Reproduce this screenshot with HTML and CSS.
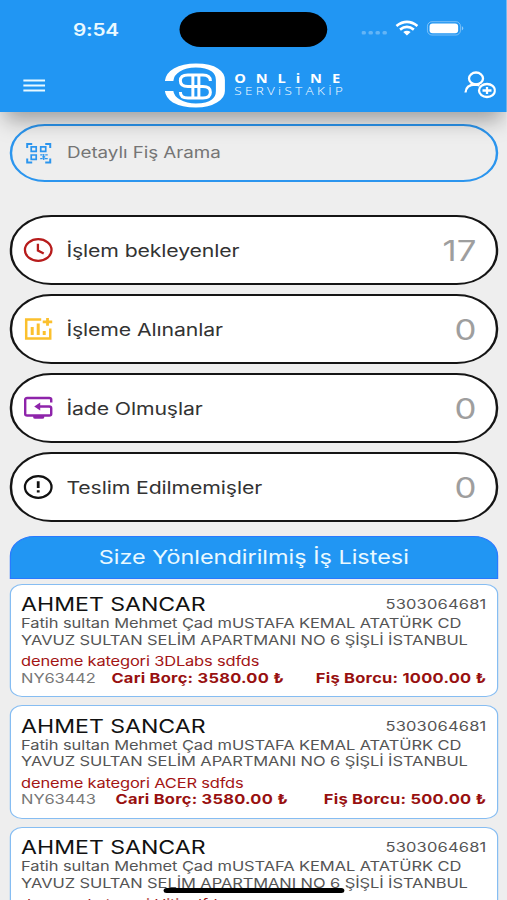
FILE: index.html
```html
<!DOCTYPE html>
<html lang="tr">
<head>
<meta charset="utf-8">
<title>Online Servis Takip</title>
<link rel="stylesheet" href="styles.css">
</head>
<body>
<div class="screen">
  <header class="header">
    <div class="status">
      <span class="time">9:54</span>
      <span class="island"></span>
      <svg class="signals" viewBox="0 0 106 18" preserveAspectRatio="none">
        <g fill="#fff" opacity=".3"><rect x="0" y="12" width="4.5" height="3.5" rx="1.5"/><rect x="7" y="12" width="4.5" height="3.5" rx="1.5"/><rect x="14" y="12" width="4.5" height="3.5" rx="1.5"/><rect x="21" y="12" width="4.5" height="3.5" rx="1.5"/></g>
        <g fill="none" stroke="#fff" stroke-width="2.7"><path d="M35 7Q45.500-1.200 56 7"/><path d="M38.600 10.600Q45.500 5.200 52.400 10.600"/></g>
        <path d="M41.800 13Q45.500 10.300 49.200 13L45.500 16.500Z" fill="#fff"/>
        <rect x="66" y="2.700" width="33" height="13.300" rx="4.500" fill="none" stroke="#fff" stroke-opacity=".4"/>
        <rect x="68.100" y="4.500" width="28.600" height="9.800" rx="3" fill="#fff"/>
        <path d="M100.400 7Q103.400 9.300 100.400 11.500Z" fill="#fff" opacity=".5"/>
      </svg>
    </div>
    <div class="bar">
      <svg class="menu" viewBox="0 0 22 13" preserveAspectRatio="none"><path d="M0 1.500H22M0 6.500H22M0 11.500H22" stroke="#e9f9ff" stroke-width="2.200"/></svg>
      <div class="brand">
        <svg class="mark" viewBox="0 0 61 45" preserveAspectRatio="none">
          <path fill="#fff" fill-rule="evenodd" d="M0 18Q1 10 9 5.500Q18 .5 31 .5Q46 .5 53 5.500Q60 10 60 17V28Q60 35 52 39.500Q44 44.500 31 44.500Q17 44.500 8 39.500Q1 35 0 28H8.500Q9 33 15 36.500Q22 40.500 31 40.500Q42 40.500 47 36.500Q51 33.500 51 28V17Q51 11.500 47 8.500Q41 4.500 31 4.500Q21 4.500 15 8.500Q9 12 8.500 18Z"/>
          <g fill="none" stroke="#fff" stroke-width="3"><path d="M45.500 18Q45.500 12 38 12H23Q15.500 12 15.500 17.700T23 23.500H38Q45.500 23.500 45.500 29.200T38 35H23Q15.500 35 15.500 29"/><path d="M28 12V35M34 12V35"/></g>
        </svg>
        <div class="words"><span class="online">ONLiNE</span><span class="servis">SERViSTAKİP</span></div>
      </div>
      <svg class="adduser" viewBox="0 0 32 28" preserveAspectRatio="none"><g fill="none" stroke="#fff" stroke-width="2.300"><ellipse cx="12" cy="7.500" rx="7" ry="6"/><path d="M1.500 21.500Q2 13.800 11 13.500Q14 13.500 15.500 14.500"/><ellipse cx="23" cy="19.500" rx="8" ry="6.500"/><path d="M18.500 19.500H27.500M23 16V23"/></g></svg>
    </div>
  </header>
  <main class="content">
    <div class="search">
      <svg class="icon" viewBox="0 0 30 24" preserveAspectRatio="none"><g fill="none" stroke="#2b95ee" stroke-width="2"><path d="M4 7V3H9M22 3H27V7M4 17.500V21.500H9M22 21.500H27V17.500"/><path d="M8 5.800H13V10.300H8ZM17.500 5.800H22.500V10.300H17.500ZM8 14H13V18.300H8Z" stroke-width="1.700"/><path d="M17 13.800H19.500M22 13.800H24.500M19 15.800H22M17 17.600H19.500M21.500 17.600H24.500M20.500 13V19" stroke-width="1.300"/></g></svg>
      <span class="placeholder">Detaylı Fiş Arama</span>
    </div>
    <div class="stats">
      <div class="stat">
        <svg class="icon" viewBox="0 0 30 24" preserveAspectRatio="none"><g fill="none" stroke="#b71c1c" stroke-width="2.300"><ellipse cx="15" cy="12" rx="13.300" ry="10.800"/><path d="M14.700 5.800V12.500L20.500 15.500"/></g></svg>
        <span class="label">İşlem bekleyenler</span><span class="count">17</span>
      </div>
      <div class="stat">
        <svg class="icon" viewBox="0 0 30 24" preserveAspectRatio="none"><g fill="none" stroke="#fbc02d" stroke-width="2.500"><path d="M18 2.500H3V21.500H27V11.500"/><path d="M9 10V18M15 6.500V18M21 14V18" stroke-width="3"/><path d="M19.500 4.800H29M24.300 1V8.800" stroke-width="2.800"/></g></svg>
        <span class="label">İşleme Alınanlar</span><span class="count">0</span>
      </div>
      <div class="stat">
        <svg class="icon" viewBox="0 0 30 24" preserveAspectRatio="none"><g fill="none" stroke="#8e24aa" stroke-width="2.400"><path d="M28 6.500V3.500Q28 2 26 2H4Q2 2 2 3.500V18Q2 19.500 4 19.500H26Q28 19.500 28 18V12.500Q28 10.500 26 10.500H14"/></g><path d="M11 10.500L17 6.500V14.500ZM10 19.500H21V21.500Q21 22.800 19 22.800H12Q10 22.800 10 21.500Z" fill="#8e24aa"/></svg>
        <span class="label">İade Olmuşlar</span><span class="count">0</span>
      </div>
      <div class="stat">
        <svg class="icon" viewBox="0 0 30 24" preserveAspectRatio="none"><g fill="none" stroke="#111" stroke-width="2.300"><ellipse cx="15" cy="12" rx="13.300" ry="10.800"/><path d="M15 6.200V13M15 15.200V17.600" stroke-width="2.800"/></g></svg>
        <span class="label">Teslim Edilmemişler</span><span class="count">0</span>
      </div>
    </div>
    <h1 class="title"><span>Size Yönlendirilmiş İş Listesi</span></h1>
    <div class="jobs">
      <article class="job">
        <div class="row top"><span class="name">AHMET SANCAR</span><span class="phone">5303064681</span></div>
        <p class="addr">Fatih sultan Mehmet Çad mUSTAFA KEMAL ATATÜRK CD<br>YAVUZ SULTAN SELİM APARTMANI NO 6 ŞİŞLİ İSTANBUL</p>
        <p class="cat">deneme kategori 3DLabs sdfds</p>
        <div class="row"><span class="no">NY63442</span><span class="debt total">Cari Borç: 3580.00 ₺</span><span class="debt">Fiş Borcu: 1000.00 ₺</span></div>
      </article>
      <article class="job">
        <div class="row top"><span class="name">AHMET SANCAR</span><span class="phone">5303064681</span></div>
        <p class="addr">Fatih sultan Mehmet Çad mUSTAFA KEMAL ATATÜRK CD<br>YAVUZ SULTAN SELİM APARTMANI NO 6 ŞİŞLİ İSTANBUL</p>
        <p class="cat">deneme kategori ACER sdfds</p>
        <div class="row"><span class="no">NY63443</span><span class="debt total">Cari Borç: 3580.00 ₺</span><span class="debt">Fiş Borcu: 500.00 ₺</span></div>
      </article>
      <article class="job">
        <div class="row top"><span class="name">AHMET SANCAR</span><span class="phone">5303064681</span></div>
        <p class="addr">Fatih sultan Mehmet Çad mUSTAFA KEMAL ATATÜRK CD<br>YAVUZ SULTAN SELİM APARTMANI NO 6 ŞİŞLİ İSTANBUL</p>
        <p class="cat">deneme kategori Hiti sdfds</p>
      </article>
    </div>
  </main>
  <div class="home"></div>
</div>
</body>
</html>
```

FILE: styles.css
```css
* { box-sizing: border-box; margin: 0; padding: 0; }
html, body { width: 507px; height: 900px; overflow: hidden; background: #eee; }

/* Portrait layout, 415px wide, widened to fill the window */
.screen {
  position: relative;
  width: 415.2px;
  height: 900px;
  overflow: hidden;
  transform: scaleX(1.2211);
  transform-origin: 0 0;
  background: #eee;
  font-family: Inter, "Liberation Sans", sans-serif;
  color: #333;
}
svg { display: block; flex: none; }
span { white-space: nowrap; }

.header {
  position: relative;
  z-index: 2;
  height: 112px;
  background: #2196f3;
  box-shadow: 0 12px 18px -4px rgba(0, 0, 0, .34);
}
.status { display: flex; height: 58px; align-items: center; }
.time { width: 87.6px; margin: 1px 0 0 59.8px; color: #e9f9ff; font-weight: 600; font-size: 17px; letter-spacing: -.2px; }
.island { width: 121px; height: 35px; border-radius: 18px; background: #000; }
.signals { width: 86.8px; height: 18px; margin: -2px 0 0 27.3px; }
.bar { display: flex; height: 54px; align-items: flex-start; }
.menu { width: 18px; height: 13px; margin: 20.5px 0 0 18.8px; }
.brand { display: flex; width: 148px; margin: 4.5px 0 0 98.5px; }
.mark { width: 50px; height: 45px; }
.words { display: flex; flex-direction: column; margin: 10px 0 0 6.5px; font-family: "Open Sans", sans-serif; color: #fff; }
.online { height: 11px; line-height: 11px; font-size: 12px; font-weight: 700; letter-spacing: 8.1px; }
.servis { height: 13px; line-height: 13px; font-size: 11px; font-weight: 300; letter-spacing: 2.75px; }
.adduser { width: 26.2px; height: 28px; margin: 13px 0 0 96.8px; }

.content { padding: 12px 7.3px 0 7.8px; }
.icon { width: 24.6px; height: 24px; }
.search {
  display: flex;
  align-items: center;
  height: 57.5px;
  padding-left: 9.4px;
  border: 2px solid #2b95ee;
  border-radius: 28.7px;
}
.placeholder { margin: 0 0 0 11.1px; font-size: 15.4px; letter-spacing: -.04px; color: #757575; }
.stats { display: flex; flex-direction: column; gap: 9.3px; margin-top: 33.3px; }
.stat {
  display: flex;
  align-items: center;
  height: 69.8px;
  padding: 0 15.8px 0 9.6px;
  border: 2px solid #151515;
  border-radius: 34px;
  background: #fff;
}
.label { margin: 2px 0 0 10.4px; font-size: 17.4px; letter-spacing: -.1px; color: #333; }
.count { margin: 1.5px 0 0 auto; font-size: 28.5px; font-weight: 400; color: #9e9e9e; }
.title {
  display: flex;
  justify-content: center;
  align-items: center;
  height: 43px;
  margin-top: 14px;
  border: 1.5px solid #2979ff;
  border-radius: 20px 20px 0 0;
  background: #2196f3;
  color: #e9f9ff;
  font-size: 19.2px;
  font-weight: 400;
}
.jobs { display: flex; flex-direction: column; gap: 8px; margin-top: 4.8px; }
.job {
  height: 113.5px;
  flex: none;
  padding: 9.8px 8.5px 0;
  border: 1.5px solid #86bdf2;
  border-radius: 10px;
  background: #fff;
}
.row { display: flex; justify-content: space-between; height: 17px; line-height: 17px; font-size: 13.5px; }
.top { height: 21px; line-height: 21px; }
.name { font-size: 18.9px; color: #111; }
.phone { color: #555; letter-spacing: .15px; }
.addr { font-size: 13.5px; line-height: 16.5px; letter-spacing: -.07px; color: #555; white-space: nowrap; }
.cat { margin-top: 5px; font-size: 13.5px; line-height: 16.5px; letter-spacing: -.15px; color: #a31515; white-space: nowrap; }
.no { letter-spacing: -.1px; color: #777; }
.debt { font-weight: 700; letter-spacing: .2px; color: #981010; }
.total { margin-right: 13.1px; }
.home { position: absolute; z-index: 3; left: 134px; top: 887.5px; width: 148px; height: 5px; border-radius: 3px; background: #000; }
```
